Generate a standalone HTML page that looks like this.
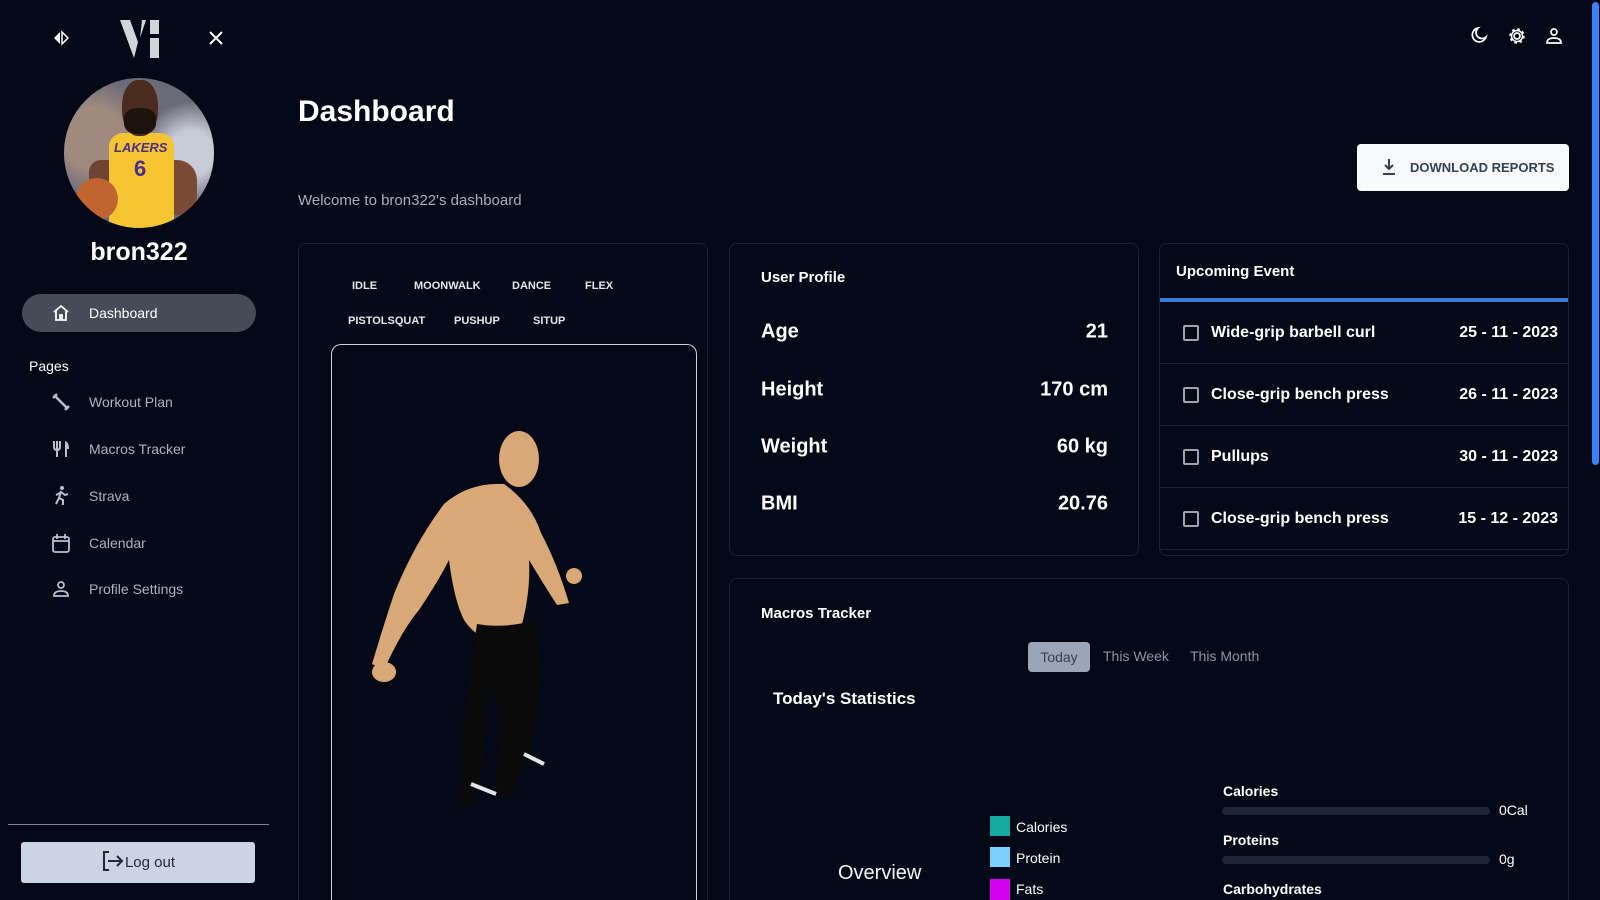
<!DOCTYPE html>
<html style="height:900px;overflow:hidden"><head><meta charset="utf-8">
<style>
*{box-sizing:border-box;margin:0;padding:0}
body{width:1600px;height:900px;overflow:hidden;background:#050816;font-family:"Liberation Sans",sans-serif;color:#fff;position:relative}
.a{position:absolute}
.nav{position:absolute;left:89px;font-size:14px;color:#aab3c2;transform:translateY(-50%)}
.ic{position:absolute;left:50px;width:22px;height:22px;transform:translateY(-50%)}
.card{position:absolute;border:1px solid #1b2130;border-radius:8px;background:#050816}
.tab{position:absolute;font-size:11px;font-weight:bold;color:#e5e7eb;transform:translateY(-50%)}
.lbl{position:absolute;left:31px;font-size:20px;font-weight:bold;transform:translateY(-50%)}
.val{position:absolute;right:30px;font-size:20px;font-weight:bold;transform:translateY(-50%)}
.row{position:absolute;left:0;right:0;height:62px;border-bottom:1px solid #1b2130}
.cb{position:absolute;left:23px;top:23px;width:16px;height:16px;border:2px solid #9ca3af;border-radius:2px}
.rt{position:absolute;left:51px;top:31px;transform:translateY(-50%);font-size:16px;font-weight:bold}
.rd{position:absolute;right:10px;top:31px;transform:translateY(-50%);font-size:16px;font-weight:bold}
.sq{position:absolute;left:990px;width:20px;height:20px}
.lg{position:absolute;left:1016px;font-size:14px;transform:translateY(-50%);white-space:nowrap}
</style></head><body>
<svg class="a" style="left:52px;top:30px" width="18" height="16" viewBox="0 0 18 16"><path d="M8 2L2 8l6 6z" fill="#fff"/><path d="M10 2l6 6-6 6z" fill="none" stroke="#fff" stroke-width="1.5"/></svg>
<svg class="a" style="left:120px;top:20px" width="44" height="38" viewBox="0 0 44 38"><path d="M0 0h10l8 22-4 16z" fill="#d1d5db"/><path d="M22 0h4l-6 18z" fill="#d1d5db"/><rect x="30" y="0" width="9" height="14" fill="#d1d5db"/><rect x="30" y="18" width="9" height="20" fill="#d1d5db"/></svg>
<svg class="a" style="left:208px;top:30px" width="16" height="16" viewBox="0 0 16 16"><path d="M2 2l12 12M14 2L2 14" stroke="#fff" stroke-width="2"/></svg>
<div class="a" style="left:64px;top:78px;width:150px;height:150px;border-radius:50%;background:#6b6a78;overflow:hidden">
 <div class="a" style="left:0;top:0;width:150px;height:150px;background:radial-gradient(circle at 20% 40%,#a08a80 0 20%,transparent 40%),radial-gradient(circle at 85% 50%,#c8ccd8 0 15%,transparent 35%)"></div>
 <div class="a" style="left:78px;top:82px;width:55px;height:55px;border-radius:20px;background:#7a4a34"></div>
 <div class="a" style="left:25px;top:82px;width:30px;height:40px;border-radius:12px;background:#6e4533"></div>
 <div class="a" style="left:45px;top:55px;width:65px;height:100px;background:#f4c531;border-radius:14px 14px 0 0"></div>
 <div class="a" style="left:58px;top:2px;width:36px;height:56px;border-radius:45%;background:#4a2c1e"></div>
 <div class="a" style="left:60px;top:30px;width:32px;height:26px;border-radius:40%;background:#1e120c"></div>
 <div class="a" style="left:50px;top:62px;font-size:13px;font-weight:bold;color:#4b2d8a;font-style:italic">LAKERS</div>
 <div class="a" style="left:70px;top:78px;font-size:22px;font-weight:bold;color:#4b2d8a">6</div>
 <div class="a" style="left:12px;top:100px;width:42px;height:42px;border-radius:50%;background:#c0652f"></div>
</div>
<div class="a" style="left:0;width:278px;top:238px;text-align:center;font-size:25px;font-weight:bold">bron322</div>
<div class="a" style="left:22px;top:294px;width:234px;height:38px;border-radius:19px;background:#464c57"></div>
<svg class="ic" style="top:313px" viewBox="0 0 22 22"><path d="M4 10L11 4l7 6M6 9v9h4v-5h2v5h4V9" fill="none" stroke="#fff" stroke-width="1.8"/></svg>
<div class="nav" style="top:313px;color:#fff">Dashboard</div>
<div class="a" style="left:29px;top:358px;font-size:14px;color:#fff">Pages</div>
<svg class="ic" style="top:402px" viewBox="0 0 22 22"><path d="M4 4l14 14M3 7l4-4M15 19l4-4" stroke="#b8c0cc" stroke-width="2.5"/></svg>
<div class="nav" style="top:402px">Workout Plan</div>
<svg class="ic" style="top:449px" viewBox="0 0 22 22"><path d="M4 3v6q0 3 3 3t3-3V3M7 3v16" stroke="#b8c0cc" stroke-width="2" fill="none"/><path d="M15 3q4 1 4 8h-2v8h-2z" fill="#b8c0cc"/></svg>
<div class="nav" style="top:449px">Macros Tracker</div>
<svg class="ic" style="top:496px" viewBox="0 0 22 22"><circle cx="12" cy="3" r="2" fill="#b8c0cc"/><path d="M11 6l-2 7 4 2v5M9 13l-3 6M11 7l4 3 3-1M10 8l-4 2" stroke="#b8c0cc" stroke-width="2" fill="none"/></svg>
<div class="nav" style="top:496px">Strava</div>
<svg class="ic" style="top:543px" viewBox="0 0 22 22"><rect x="3" y="5" width="16" height="15" rx="2" fill="none" stroke="#b8c0cc" stroke-width="1.8"/><path d="M3 9h16M7 2v5M15 2v5" stroke="#b8c0cc" stroke-width="1.8"/></svg>
<div class="nav" style="top:543px">Calendar</div>
<svg class="ic" style="top:589px" viewBox="0 0 22 22"><circle cx="11" cy="7" r="3" fill="none" stroke="#b8c0cc" stroke-width="1.8"/><path d="M4 18q0-5 7-5t7 5z" fill="none" stroke="#b8c0cc" stroke-width="1.8"/></svg>
<div class="nav" style="top:589px">Profile Settings</div>
<div class="a" style="left:8px;top:824px;width:261px;height:1px;background:#7c8494"></div>
<div class="a" style="left:21px;top:842px;width:234px;height:41px;border-radius:3px;background:#cbd5e1;color:#1f2937;font-size:15px;text-align:center;line-height:41px"><svg style="vertical-align:-5px" width="24" height="22" viewBox="0 0 24 22"><path d="M8 2H3v18h5" fill="none" stroke="#1f2937" stroke-width="2"/><path d="M7 11h14M16 6l5 5-5 5" fill="none" stroke="#1f2937" stroke-width="2"/></svg>Log out</div>
<svg class="a" style="left:1468px;top:26px" width="20" height="20" viewBox="0 0 20 20"><path d="M10 2a7 7 0 1 0 8 9A6 6 0 0 1 10 2z" fill="none" stroke="#fff" stroke-width="1.7"/></svg>
<svg class="a" style="left:1507px;top:26px" width="20" height="20" viewBox="0 0 20 20"><circle cx="10" cy="10" r="3" fill="none" stroke="#fff" stroke-width="1.7"/><circle cx="10" cy="10" r="6.5" fill="none" stroke="#fff" stroke-width="2.5" stroke-dasharray="2.5 2.6"/><circle cx="10" cy="10" r="5.5" fill="none" stroke="#fff" stroke-width="1.5"/></svg>
<svg class="a" style="left:1544px;top:26px" width="20" height="20" viewBox="0 0 20 20"><circle cx="10" cy="6" r="3" fill="none" stroke="#fff" stroke-width="1.7"/><path d="M3 17q0-5 7-5t7 5z" fill="none" stroke="#fff" stroke-width="1.7"/></svg>
<div class="a" style="left:1592px;top:2px;width:7px;height:463px;border-radius:4px;background:#3b82f6"></div>
<div class="a" style="left:298px;top:95px;font-size:30px;font-weight:bold">Dashboard</div>
<div class="a" style="left:1357px;top:144px;width:212px;height:47px;border-radius:4px;background:#f8fafc;color:#334155;font-size:13px;font-weight:bold;line-height:47px;padding-left:25px;white-space:nowrap"><svg style="vertical-align:-4px;margin-right:14px" width="14" height="18" viewBox="0 0 14 18"><path d="M7 1v10M3 7l4 4 4-4M1 16h12" fill="none" stroke="#334155" stroke-width="2"/></svg>DOWNLOAD REPORTS</div>
<div class="a" style="left:298px;top:192px;font-size:15px;color:#a8b0bd">Welcome to bron322's dashboard</div>
<div class="card" style="left:298px;top:243px;width:410px;height:657px;border-bottom:none;border-radius:8px 8px 0 0">
 <div class="tab" style="left:53px;top:42px">IDLE</div>
 <div class="tab" style="left:115px;top:42px">MOONWALK</div>
 <div class="tab" style="left:213px;top:42px">DANCE</div>
 <div class="tab" style="left:286px;top:42px">FLEX</div>
 <div class="tab" style="left:49px;top:77px">PISTOLSQUAT</div>
 <div class="tab" style="left:155px;top:77px">PUSHUP</div>
 <div class="tab" style="left:234px;top:77px">SITUP</div>
 <div class="a" style="left:32px;top:100px;width:366px;height:556px;border:1px solid #d1d5db;border-bottom:none;border-radius:10px 10px 0 0"></div>
 <svg class="a" style="left:50px;top:170px" width="250" height="400" viewBox="0 0 250 400">
  <g fill="#d9a877">
   <ellipse cx="170" cy="45" rx="20" ry="28"/>
   <path d="M155 70q-35-2-60 20-30 40-50 90-10 30-22 70l12 6q18-40 35-60 20-30 30-50 5 40 15 60 10 15 25 20l30-5q12-40 10-75 15 25 28 45l12-2q-12-40-28-70-10-30-37-49z"/>
   <ellipse cx="35" cy="258" rx="12" ry="10"/>
   <ellipse cx="225" cy="162" rx="8" ry="8"/>
  </g>
  <path d="M128 210q28 5 58-4 10 50 0 110-8 40-25 65h-15l5-70-10-40-5 60-10 60h-14l3-90z" fill="#0a0a0a"/>
  <path d="M122 370l25 10M175 340l20 10" stroke="#e5e5e5" stroke-width="4"/>
 </svg>
</div>
<div class="card" style="left:729px;top:243px;width:410px;height:313px">
 <div class="a" style="left:31px;top:25px;font-size:15px;font-weight:bold">User Profile</div>
 <div class="lbl" style="top:88px">Age</div><div class="val" style="top:88px">21</div>
 <div class="lbl" style="top:146px">Height</div><div class="val" style="top:146px">170 cm</div>
 <div class="lbl" style="top:203px">Weight</div><div class="val" style="top:203px">60 kg</div>
 <div class="lbl" style="top:260px">BMI</div><div class="val" style="top:260px">20.76</div>
</div>
<div class="card" style="left:1159px;top:243px;width:410px;height:313px;overflow:hidden">
 <div class="a" style="left:16px;top:19px;font-size:15px;font-weight:bold">Upcoming Event</div>
 <div class="a" style="left:0;right:0;top:54px;height:4px;background:#3b78dc"></div>
 <div class="row" style="top:58px"><div class="cb"></div><div class="rt">Wide-grip barbell curl</div><div class="rd">25 - 11 - 2023</div></div>
 <div class="row" style="top:120px"><div class="cb"></div><div class="rt">Close-grip bench press</div><div class="rd">26 - 11 - 2023</div></div>
 <div class="row" style="top:182px"><div class="cb"></div><div class="rt">Pullups</div><div class="rd">30 - 11 - 2023</div></div>
 <div class="row" style="top:244px"><div class="cb"></div><div class="rt">Close-grip bench press</div><div class="rd">15 - 12 - 2023</div></div>
</div>
<div class="card" style="left:729px;top:578px;width:840px;height:322px;border-bottom:none;border-radius:8px 8px 0 0"></div>
<div class="a" style="left:761px;top:605px;font-size:15px;font-weight:bold">Macros Tracker</div>
<div class="a" style="left:1028px;top:642px;width:62px;height:30px;border-radius:4px;background:#9aa5b8;color:#374151;font-size:14px;text-align:center;line-height:30px">Today</div>
<div class="a" style="left:1103px;top:648px;font-size:14px;color:#8c94a3">This Week</div>
<div class="a" style="left:1190px;top:648px;font-size:14px;color:#8c94a3">This Month</div>
<div class="a" style="left:773px;top:689px;font-size:17px;font-weight:bold">Today's Statistics</div>
<div class="a" style="left:838px;top:862px;font-size:20px;color:#f3f4f6">Overview</div>
<div class="sq" style="top:816px;background:#14aaa0"></div><div class="lg" style="top:827px">Calories</div>
<div class="sq" style="top:847px;background:#7dd0fb"></div><div class="lg" style="top:858px">Protein</div>
<div class="sq" style="top:879px;height:21px;background:#d300ef"></div><div class="lg" style="top:889px">Fats</div>
<div class="a" style="left:1223px;top:783px;font-size:14px;font-weight:bold">Calories</div>
<div class="a" style="left:1222px;top:807px;width:268px;height:8px;border-radius:4px;background:#1e2635"></div>
<div class="a" style="left:1499px;top:802px;font-size:14px">0Cal</div>
<div class="a" style="left:1223px;top:832px;font-size:14px;font-weight:bold">Proteins</div>
<div class="a" style="left:1222px;top:856px;width:268px;height:8px;border-radius:4px;background:#1e2635"></div>
<div class="a" style="left:1499px;top:851px;font-size:14px">0g</div>
<div class="a" style="left:1223px;top:881px;font-size:14px;font-weight:bold;line-height:17px;height:19px;overflow:hidden">Carbohydrates</div>
</body></html>
